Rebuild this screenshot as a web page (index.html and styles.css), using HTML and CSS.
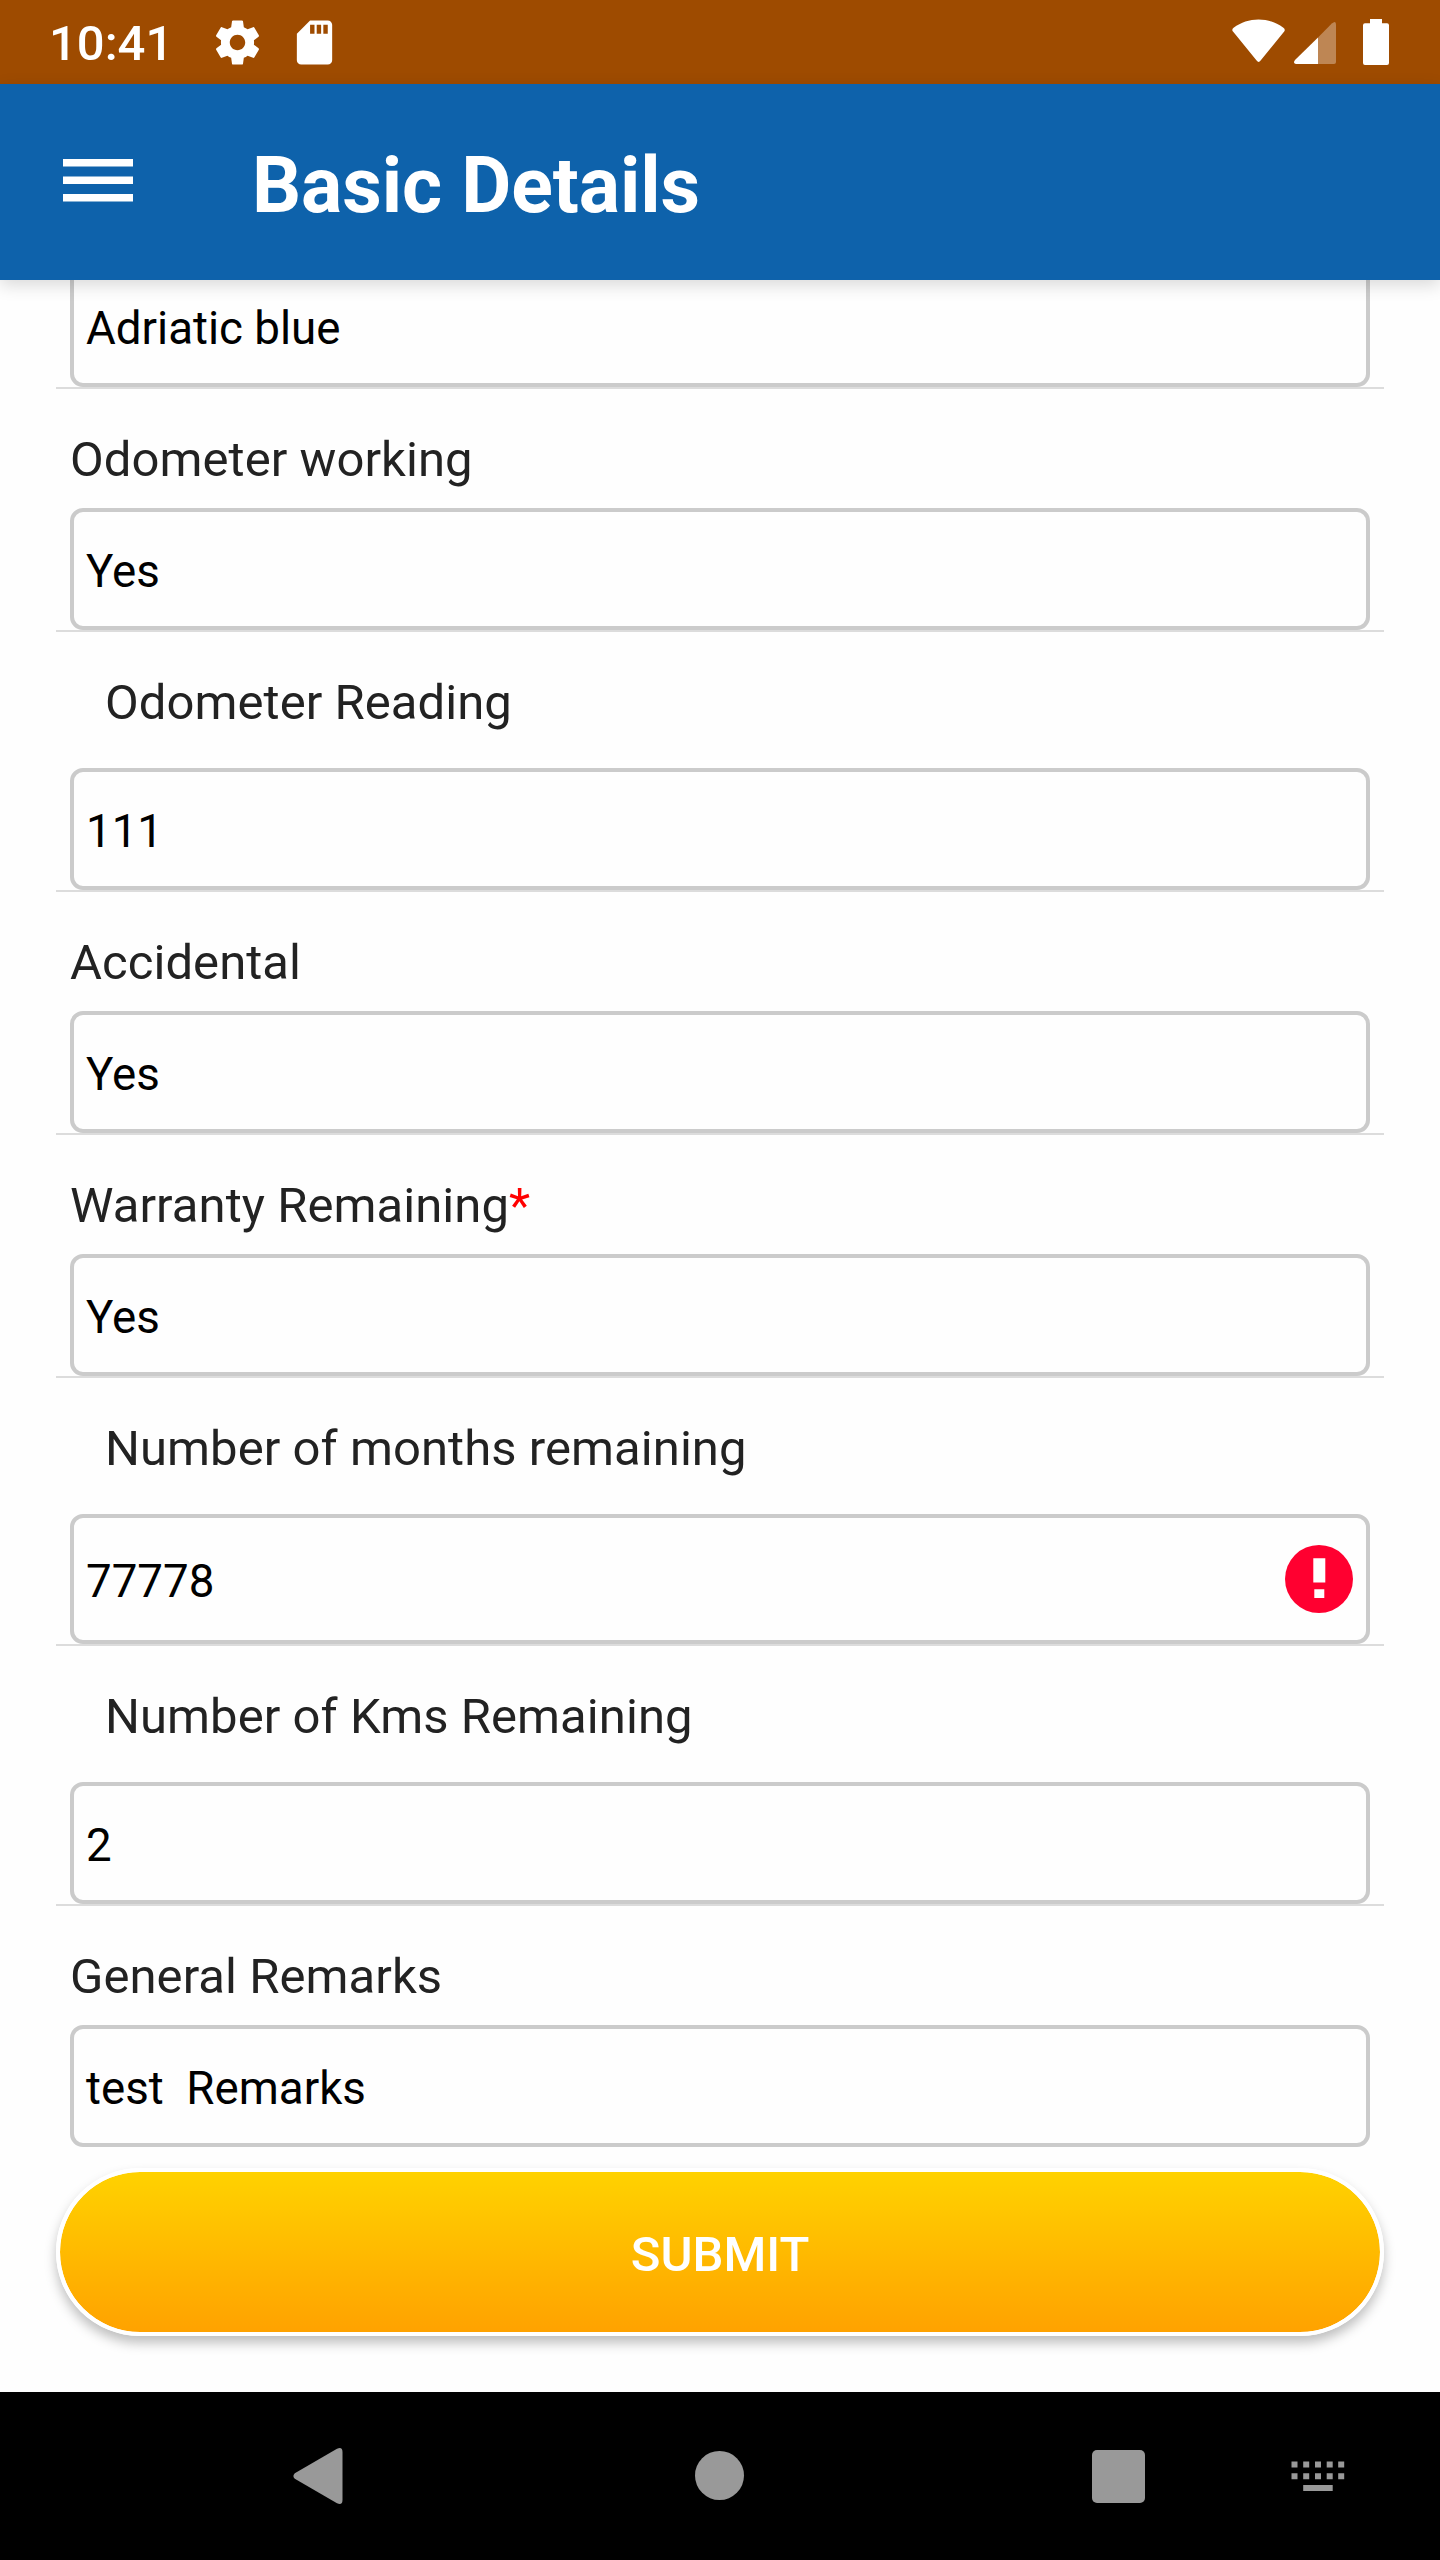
FILE: index.html
```html
<!DOCTYPE html>
<html lang="en">
<head>
<meta charset="utf-8">
<title>Basic Details</title>
<link rel="stylesheet" href="styles.css">
</head>
<body>
<div class="screen">
  <div class="status-bar">
    <span class="clock">10:41</span>
    <svg class="gear" viewBox="0 0 24 24"><path d="M19.43 12.98c.04-.32.07-.64.07-.98s-.03-.66-.07-.98l2.11-1.65c.19-.15.24-.42.12-.64l-2-3.46c-.12-.22-.39-.3-.61-.22l-2.49 1c-.52-.4-1.08-.73-1.69-.98l-.38-2.65C14.46 2.18 14.25 2 14 2h-4c-.25 0-.46.18-.49.42l-.38 2.65c-.61.25-1.17.59-1.69.98l-2.49-1c-.23-.09-.49 0-.61.22l-2 3.46c-.13.22-.07.49.12.64l2.11 1.65c-.04.32-.07.65-.07.98s.03.66.07.98l-2.11 1.65c-.19.15-.24.42-.12.64l2 3.46c.12.22.39.3.61.22l2.49-1c.52.4 1.08.73 1.69.98l.38 2.65c.03.24.24.42.49.42h4c.25 0 .46-.18.49-.42l.38-2.65c.61-.25 1.17-.59 1.69-.98l2.49 1c.23.09.49 0 .61-.22l2-3.46c.12-.22.07-.49-.12-.64l-2.11-1.65zM12 15.5c-1.93 0-3.5-1.57-3.5-3.5s1.57-3.5 3.5-3.5 3.5 1.57 3.5 3.5-1.57 3.5-3.5 3.5z"/></svg>
    <svg class="sd" viewBox="0 0 24 24"><path d="M18 2h-8L4.02 8 4 20c0 1.100.9 2 2 2h12c1.100 0 2-.9 2-2V4c0-1.100-.9-2-2-2zm-6 6h-2V4h2v4zm3 0h-2V4h2v4zm3 0h-2V4h2v4z"/></svg>
    <svg class="signals" viewBox="0 0 160 50">
      <path d="M1.2 13.8Q-.8 11.6 1.6 9.8C9 4.200 17.500 1.500 26.500 1.500S44 4.200 51.400 9.800Q53.800 11.600 52 13.800L28.600 42.600Q26.600 45.200 24.600 42.600Z"/>
      <path opacity=".33" d="M86 19.500 99.800 5.600Q104 2 104 6.500V44q0 2-2 2H86Z"/>
      <path d="M86 19.500V46H64q-3.500-1-1-4Z"/>
      <path d="M138 1h12v4.300h5q2 0 2 2V45q0 2-2 2h-22q-2 0-2-2V7.300q0-2 2-2h5Z"/>
    </svg>
  </div>
  <header class="app-bar">
    <svg class="menu" viewBox="0 0 70 44"><path d="M0 0h70v7.500H0zM0 17.500h70V25H0zM0 35h70v7.500H0z"/></svg>
    <h1 class="title">Basic Details</h1>
  </header>
  <main class="form">
    <div class="row"><div class="field">Adriatic blue</div></div>
    <div class="row"><div class="label">Odometer working</div><div class="field">Yes</div></div>
    <div class="row"><div class="label nested">Odometer Reading</div><div class="field">111</div></div>
    <div class="row"><div class="label">Accidental</div><div class="field">Yes</div></div>
    <div class="row"><div class="label">Warranty Remaining<span class="required">*</span></div><div class="field">Yes</div></div>
    <div class="row"><div class="label nested">Number of months remaining</div>
      <div class="field invalid">77778<svg class="error" viewBox="0 0 68 68"><circle cx="34" cy="34" r="34"/><path d="M28.300 13.200h12v24.300h-12zM29.300 44.300h10v8.700h-10z"/></svg></div></div>
    <div class="row"><div class="label nested">Number of Kms Remaining</div><div class="field">2</div></div>
    <div class="row last"><div class="label">General Remarks</div><div class="field">test  Remarks</div></div>
    <button class="submit">SUBMIT</button>
  </main>
  <nav class="nav-bar">
    <svg viewBox="0 0 50 56"><path d="M44 .8Q49.500-1.500 49.500 4V52Q49.500 57.500 44 55.200L1.800 30.800Q-1 28 1.800 25.200Z"/></svg>
    <svg viewBox="0 0 50 50"><circle cx="24.500" cy="24.500" r="24.500"/></svg>
    <svg viewBox="0 0 53 53"><rect width="53" height="53" rx="5"/></svg>
    <svg viewBox="0 0 54 30"><path d="M.5.500h6v6h-6zM12.200.500h6v6h-6zM24 .5h6v6h-6zM35.700.500h6v6h-6zM47.200.500h6v6h-6zM.5 12.200h6v6h-6zM12.200 12.200h6v6h-6zM24 12.200h6v6h-6zM35.700 12.200h6v6h-6zM47.200 12.200h6v6h-6zM12.200 24h29.500v6H12.200z"/></svg>
  </nav>
</div>
</body>
</html>
```
FILE: styles.css
```css
* { box-sizing: border-box; }
body { margin: 0; font-family: Roboto, sans-serif; background: #fefefe; }
svg { display: block; flex: none; }
.screen { width: 1440px; height: 2560px; display: flex; flex-direction: column; overflow: hidden; }

.status-bar {
  flex: none; height: 84px; display: flex; align-items: flex-start;
  background: #9e4b00; color: #fff; fill: #fff; padding-left: 49px;
}
.clock { width: 162px; font-size: 49px; font-weight: 500; line-height: 88px; }
.gear { width: 53px; height: 53px; margin-top: 16px; }
.sd { width: 53px; height: 53px; margin: 16px 0 0 24px; }
.signals { width: 160px; height: 50px; margin: 18px 0 0 891px; }

.app-bar {
  flex: none; height: 196px; display: flex; align-items: flex-start; position: relative; z-index: 1;
  padding-left: 63px; background: #0e62ab; box-shadow: 0 5px 16px rgba(0, 0, 0, .15);
}
.menu { width: 70px; height: 44px; margin-top: 75px; fill: #fff; }
.title { margin: 0 0 0 119px; color: #fff; font-size: 77px; font-weight: 700; line-height: 205px; letter-spacing: -.05px; }

.form { flex: 1; min-height: 0; padding: 0 56px; margin-top: -15px; }
.row { padding: 0 14px; border-bottom: 2px solid #dcdcdc; }
.row.last { border-bottom: 0; }
.label { height: 119px; padding-top: 41px; font-size: 49px; line-height: 60px; letter-spacing: .06px; color: #222; white-space: pre; }
.label.nested { height: 136px; padding-left: 35px; }
.required { color: #f00; }
.field {
  height: 122px; display: flex; align-items: center; justify-content: space-between;
  border: 4px solid #cbcbcb; border-radius: 13px; padding: 5px 13px 0 12px;
  font-size: 45.7px; line-height: 54px; color: #000; white-space: pre;
}
.field.invalid { height: 130px; }
.error { width: 68px; height: 68px; margin-bottom: 5px; }
.error circle { fill: #ff0030; }
.error path { fill: #fff; }

.submit {
  display: block; width: 1328px; height: 168px; margin-top: 21px; padding: 5px 0 0;
  border: 4px solid #fff; border-radius: 84px;
  background: linear-gradient(#ffd200, #ffa200) padding-box;
  box-shadow: 0 7px 12px rgba(0, 0, 0, .25);
  font: 500 49px/60px Roboto, sans-serif; color: #fff;
}

.nav-bar { flex: none; height: 168px; display: flex; align-items: center; background: #000; fill: #999; padding-left: 292.5px; }
.nav-bar svg:nth-child(1) { width: 50px; height: 56px; }
.nav-bar svg:nth-child(2) { width: 50px; height: 50px; margin-left: 352px; }
.nav-bar svg:nth-child(3) { width: 53px; height: 53px; margin-left: 347px; }
.nav-bar svg:nth-child(4) { width: 54px; height: 30px; margin-left: 146.5px; }
```
